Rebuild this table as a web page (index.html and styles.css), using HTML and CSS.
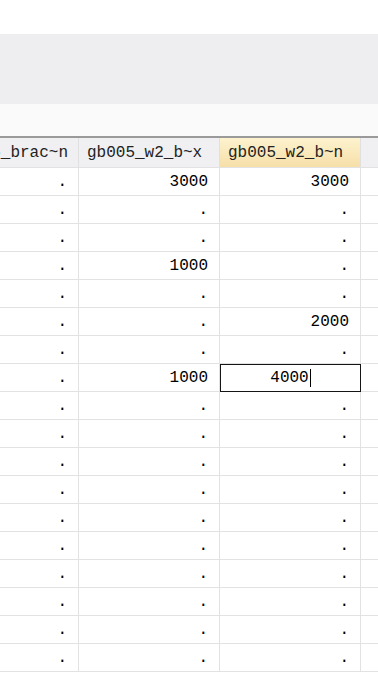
FILE: index.html
```html
<!DOCTYPE html>
<html>
<head>
<meta charset="utf-8">
<link rel="stylesheet" href="styles.css">
</head>
<body>
<div class="app">
  <div class="blank"></div>
  <div class="toolbar"></div>
  <div class="strip"></div>
  <div class="sheet">
    <div class="hcell clip"><span>gb005_brac~n</span></div>
    <div class="hcell">gb005_w2_b~x</div>
    <div class="hcell active">gb005_w2_b~n</div>
    <div class="hcell rest"></div>

    <div class="cell">.</div><div class="cell">3000</div><div class="cell">3000</div><div class="cell rest"></div>
    <div class="cell">.</div><div class="cell">.</div><div class="cell">.</div><div class="cell rest"></div>
    <div class="cell">.</div><div class="cell">.</div><div class="cell">.</div><div class="cell rest"></div>
    <div class="cell">.</div><div class="cell">1000</div><div class="cell">.</div><div class="cell rest"></div>
    <div class="cell">.</div><div class="cell">.</div><div class="cell">.</div><div class="cell rest"></div>
    <div class="cell">.</div><div class="cell">.</div><div class="cell">2000</div><div class="cell rest"></div>
    <div class="cell">.</div><div class="cell">.</div><div class="cell">.</div><div class="cell rest"></div>
    <div class="cell">.</div><div class="cell">1000</div><div class="cell editing"><span class="edit-text">4000</span><span class="caret"></span></div><div class="cell rest"></div>
    <div class="cell">.</div><div class="cell">.</div><div class="cell">.</div><div class="cell rest"></div>
    <div class="cell">.</div><div class="cell">.</div><div class="cell">.</div><div class="cell rest"></div>
    <div class="cell">.</div><div class="cell">.</div><div class="cell">.</div><div class="cell rest"></div>
    <div class="cell">.</div><div class="cell">.</div><div class="cell">.</div><div class="cell rest"></div>
    <div class="cell">.</div><div class="cell">.</div><div class="cell">.</div><div class="cell rest"></div>
    <div class="cell">.</div><div class="cell">.</div><div class="cell">.</div><div class="cell rest"></div>
    <div class="cell">.</div><div class="cell">.</div><div class="cell">.</div><div class="cell rest"></div>
    <div class="cell">.</div><div class="cell">.</div><div class="cell">.</div><div class="cell rest"></div>
    <div class="cell">.</div><div class="cell">.</div><div class="cell">.</div><div class="cell rest"></div>
    <div class="cell">.</div><div class="cell">.</div><div class="cell">.</div><div class="cell rest"></div>
  </div>
</div>
</body>
</html>
```
FILE: styles.css
```css
* { box-sizing: border-box; }
html, body { margin: 0; padding: 0; background: #ffffff; }
body { width: 378px; height: 675px; overflow: hidden; }
.app { display: flex; flex-direction: column; }
.blank { height: 34px; background: #ffffff; }
.toolbar { height: 70px; background: #eeeef0; }
.strip { height: 32px; background: #fafafa; border-bottom: 2px solid #9a9a9a; height: 34px; }
.sheet {
  display: grid;
  grid-template-columns: 79px 141px 141px 1fr;
  grid-auto-rows: 28px;
  grid-template-rows: 30px;
  font-family: "Liberation Mono", "Courier New", monospace;
  font-size: 16px;
  color: #111;
}
.hcell {
  background: #f0f0f2;
  border-right: 1px solid #e0e0e0;
  border-bottom: 1px solid #e2e2e2;
  display: flex;
  align-items: center;
  padding-left: 8px;
  padding-top: 1px;
  white-space: nowrap;
  overflow: hidden;
  color: #222;
}
.hcell.clip { justify-content: flex-end; padding-left: 0; padding-right: 10px; }
.hcell.active { background: linear-gradient(#fdf3cf, #f6dfa8); }
.hcell.rest, .cell.rest { border-right: none; }
.cell {
  border-right: 1px solid #e2e2e2;
  border-bottom: 1px solid #e2e2e2;
  display: flex;
  align-items: center;
  justify-content: flex-end;
  padding-right: 11px;
  padding-top: 1px;
  white-space: nowrap;
  color: #000;
}
.cell.editing {
  outline: 1px solid #151515;
  outline-offset: -1px;
  justify-content: center;
  padding-right: 0;
  padding-left: 1px;
}
.caret {
  display: inline-block;
  width: 1px;
  height: 18px;
  background: #000;
  margin-left: 1px;
}
```
